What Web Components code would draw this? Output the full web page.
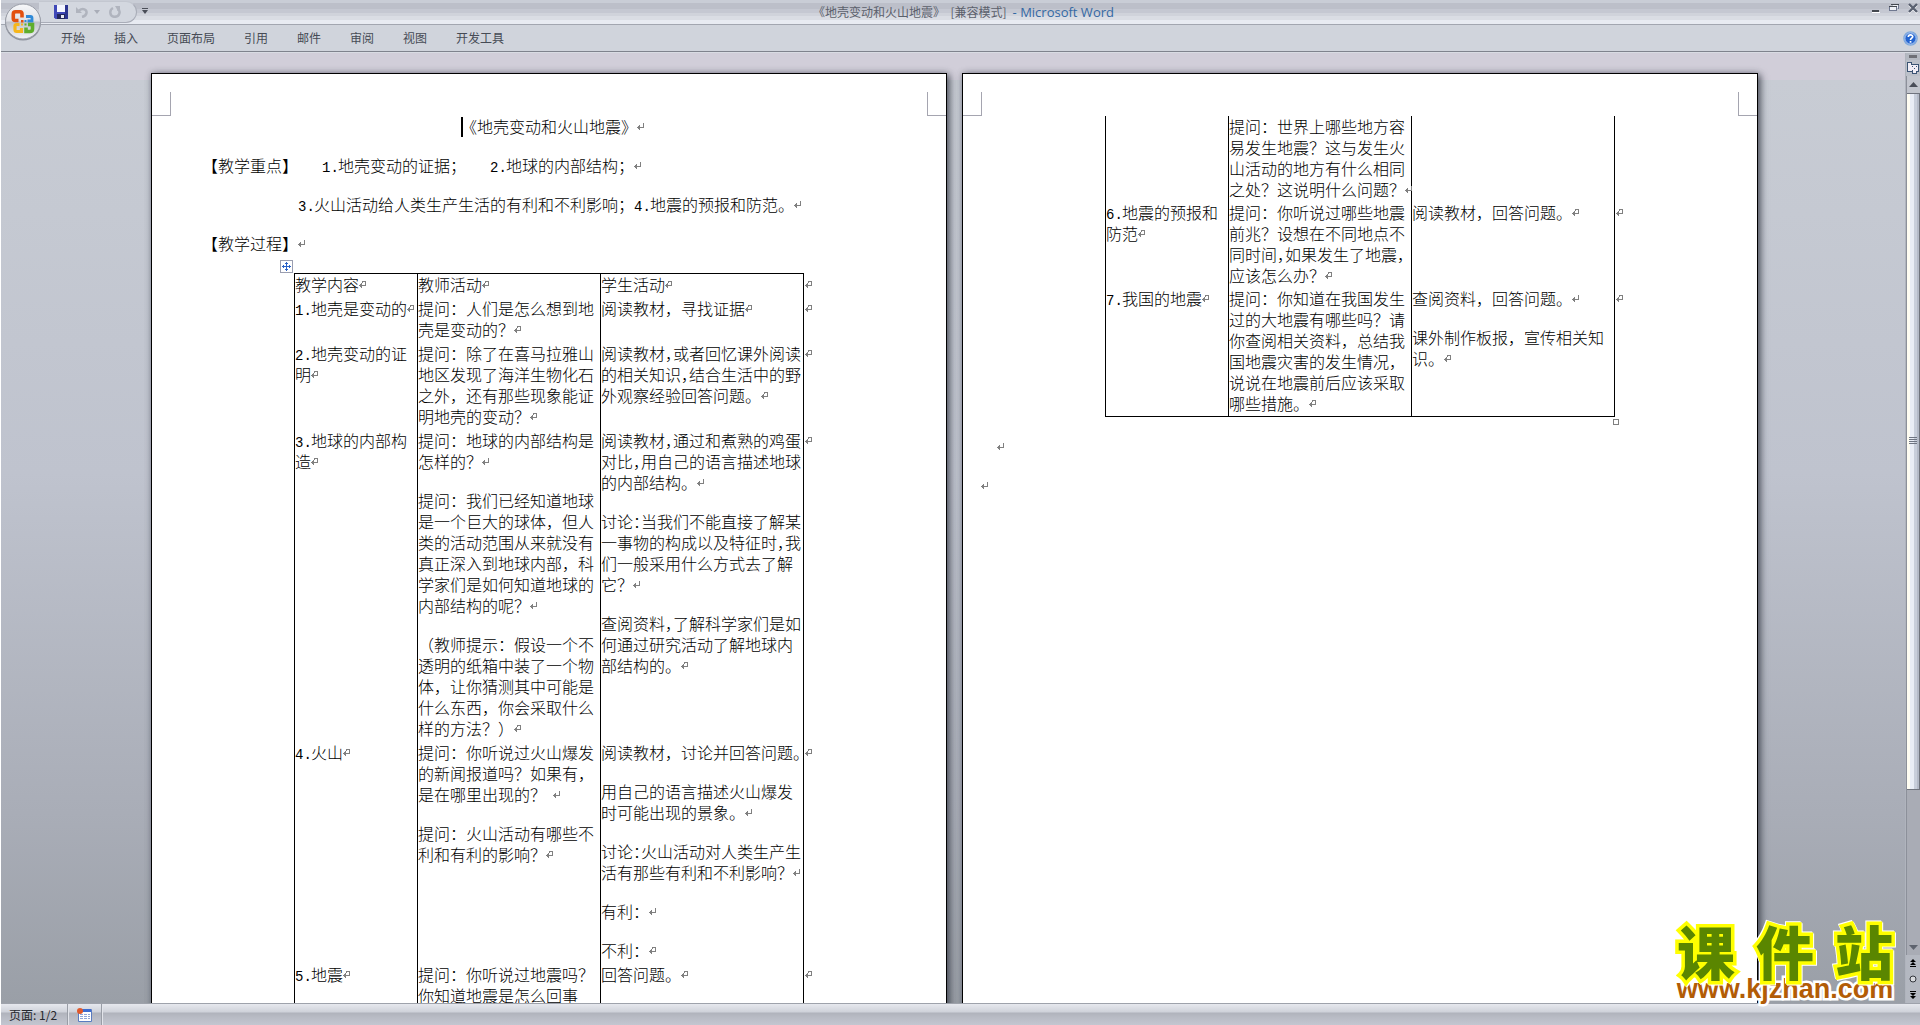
<!DOCTYPE html>
<html lang="zh-CN">
<head>
<meta charset="utf-8">
<title>《地壳变动和火山地震》 - Microsoft Word</title>
<style>
html, body { height: 100%; margin: 0; }
body { background: #fff; overflow: hidden; font-family: "Noto Sans CJK SC", sans-serif; }
</style>
</head>
<body>
<word-window></word-window>
<script>
const define = (name, html, init) => {
  const tpl = document.createElement('template');
  tpl.innerHTML = html;
  customElements.define(name, class extends HTMLElement {
    constructor() {
      super();
      this.attachShadow({ mode: 'open' }).append(tpl.content.cloneNode(true));
    }
    connectedCallback() { if (init) init(this, this.shadowRoot); }
  });
};

/* Formatting marks: "para" ends a paragraph, "cell" ends a table cell */
define('para-mark', `
<style>
:host { display: inline-block; width: 8px; height: 8px; margin-right: -8px; vertical-align: 2px; line-height: 0; }
svg { display: block; fill: none; stroke: #808080; shape-rendering: crispEdges; }
:host(:not([kind=cell])) .cell, :host([kind=cell]) .para { display: none; }
</style>
<svg width="8" height="8" viewBox="0 0 8 8" aria-hidden="true">
  <path class="para" d="M6.5 0V4M7 4.5H0M1.5 3V6M2.5 2V7"/>
  <path class="cell" d="M3 .5H7M6.5 0V5M3.5 0V2M7 4.5H0M1.5 3V6M2.5 2V7"/>
</svg>`);

/* "~" after a mark asks for its half-width form; a closing "^" leaves out the end mark */
const richLine = s => s
  .replace(/^(\d\.)/, '<span class="num">$1</span>')
  .replace(/([，：])~/g, '<span class="half">$1</span>');
const richText = (s, kind) =>
  s.replace('^', '').split('\n').map(richLine).join('<br>') + (s.endsWith('^') ? '' : `<para-mark kind="${kind}"></para-mark>`);
const typeStyles = `
.num { display: inline-block; width: 16px; font: 400 14px/16px "Liberation Mono", monospace; }
.half { font-feature-settings: "halt"; }`;

const lessons = {
  first: [
    [['教学内容'], ['教师活动'], ['学生活动']],
    [['1.地壳是变动的'], ['提问：人们是怎么想到地\n壳是变动的？'], ['阅读教材，寻找证据']],
    [['2.地壳变动的证\n明'],
     ['提问：除了在喜马拉雅山\n地区发现了海洋生物化石\n之外，还有那些现象能证\n明地壳的变动？'],
     ['阅读教材，~或者回忆课外阅读\n的相关知识，~结合生活中的野\n外观察经验回答问题。']],
    [['3.地球的内部构\n造'],
     ['提问：地球的内部结构是\n怎样的？',
      '提问：我们已经知道地球\n是一个巨大的球体，但人\n类的活动范围从来就没有\n真正深入到地球内部，科\n学家们是如何知道地球的\n内部结构的呢？',
      '（教师提示：假设一个不\n透明的纸箱中装了一个物\n体，让你猜测其中可能是\n什么东西，你会采取什么\n样的方法？）'],
     ['阅读教材，~通过和煮熟的鸡蛋\n对比，~用自己的语言描述地球\n的内部结构。',
      '讨论：~当我们不能直接了解某\n一事物的构成以及特征时，~我\n们一般采用什么方式去了解\n它？',
      '查阅资料，~了解科学家们是如\n何通过研究活动了解地球内\n部结构的。']],
    [['4.火山'],
     ['提问：你听说过火山爆发\n的新闻报道吗？如果有，\n是在哪里出现的？&nbsp;&nbsp;', '提问：火山活动有哪些不\n利和有利的影响？'],
     ['阅读教材，讨论并回答问题。^', '用自己的语言描述火山爆发\n时可能出现的景象。',
      '讨论：~火山活动对人类生产生\n活有那些有利和不利影响？', '有利：', '不利：']],
    [['5.地震'], ['提问：你听说过地震吗？\n你知道地震是怎么回事^'], ['回答问题。']]
  ],
  second: [
    [[], ['提问：世界上哪些地方容\n易发生地震？这与发生火\n山活动的地方有什么相同\n之处？这说明什么问题？'], []],
    [['6.地震的预报和\n防范'],
     ['提问：你听说过哪些地震\n前兆？设想在不同地点不\n同时间，~如果发生了地震，~\n应该怎么办？'],
     ['阅读教材，回答问题。']],
    [['7.我国的地震'],
     ['提问：你知道在我国发生\n过的大地震有哪些吗？请\n你查阅相关资料，总结我\n国地震灾害的发生情况，\n说说在地震前后应该采取\n哪些措施。'],
     ['查阅资料，回答问题。', '课外制作板报，宣传相关知\n识。']]
  ]
};

define('lesson-table', `
<style>
:host { display: block; position: relative; width: 510px; margin-left: 124px; }
table { border-collapse: collapse; table-layout: fixed; width: 523px; }
td, th { padding: 0 0 var(--row-gap, 3px) 0; vertical-align: top; text-align: left; font-weight: inherit; white-space: nowrap;
  border-left: 1px solid #000; border-right: 1px solid #000; line-height: 21px; }
.end { border-right: 0; padding-left: 1px; }
:host([part-of=start]) tr:first-child > :not(.end) { border-top: 1px solid #000; }
:host([part-of=finish]) tr:last-child > :not(.end) { border-bottom: 1px solid #000; }
p { margin: 0 0 18px; }
p:last-child { margin: 0; }
.handle { position: absolute; left: -14px; top: -13px; }
.corner { position: absolute; left: 508px; bottom: -8px; width: 4px; height: 4px; border: 1px solid #808080; display: none; }
:host([part-of=start]) .handle { display: block; }
:host([part-of=finish]) .corner { display: block; }
:host([part-of=finish]) .handle { display: none; }
${typeStyles}
</style>
<table><colgroup><col style="width:123px"><col style="width:183px"><col style="width:203px"><col style="width:14px"></colgroup><tbody></tbody></table>
<svg class="handle" width="13" height="13" viewBox="0 0 13 13" aria-hidden="true" shape-rendering="crispEdges">
  <path d="M.5.5h12v12H.5z" fill="#fff" stroke="#9a9eb0"/>
  <path d="M6.5 2v9M2 6.5h9M5 3.5h3M5 9.5h3M3.5 5v3M9.5 5v3" stroke="#2a62c8" fill="none"/>
</svg>
<span class="corner"></span>`, (host, root) => {
  const rows = lessons[host.getAttribute('lessons')];
  const start = host.getAttribute('part-of') === 'start';
  root.querySelector('tbody').innerHTML = rows.map((row, r) => {
    const tag = start && r === 0 ? 'th' : 'td';
    const runsOn = !start && r === 0;
    const cells = row.map(paras => `<${tag}>` + paras.map((p, i) =>
      `<p>${richText(p, i === paras.length - 1 && !runsOn ? 'cell' : 'para')}</p>`).join('') + `</${tag}>`).join('');
    const end = runsOn ? '' : '<para-mark kind="cell"></para-mark>';
    return `<tr>${cells}<td class="end">${end}</td></tr>`;
  }).join('');
});

define('doc-para', `
<style>
:host { display: block; margin-bottom: 18px; line-height: 21px; white-space: nowrap; }
:host([indent="1"]) { padding-left: 16px; }
:host([indent="2"]) { padding-left: 32px; }
:host([indent="8"]) { padding-left: 128px; }
:host([centered]) { text-align: center; }
.caret { display: inline-block; width: 2px; height: 20px; margin-right: -2px; background: #000; vertical-align: -4px; }
.item + .item, .head + .item { margin-left: 24px; }
${typeStyles}
</style><span class="body"></span>`, (host, root) => {
  const parts = (host.getAttribute('text') || '').split('|').filter(Boolean);
  root.querySelector('.body').innerHTML =
    (host.hasAttribute('caret') ? '<span class="caret"></span>' : '') +
    parts.map(p => `<span class="${p[0] === '【' ? 'head' : host.hasAttribute('run') ? '' : 'item'}">${richLine(p)}</span>`).join('') +
    '<para-mark></para-mark>';
});

define('doc-page', `
<style>
:host { display: block; flex: none; box-sizing: border-box; width: 796px; min-height: 1125px; border: 1px solid #000; background: #fff; color: #000;
  box-shadow: 3px 2px 7px rgba(40,44,56,.65), 0 0 6px rgba(90,96,110,.45); font-size: 16px; font-weight: 300; }
.corners { display: flex; justify-content: space-between; padding-top: 18px; }
.corners i { box-sizing: border-box; width: 19px; height: 24px; border-bottom: 1px solid #a5a5b0; }
.corners i:first-child { border-right: 1px solid #a5a5b0; }
.corners i:last-child { border-left: 1px solid #a5a5b0; }
.content { padding: 0 18px; }
</style>
<div class="corners"><i></i><i></i></div>
<div class="content"><slot></slot></div>`);

define('quick-access', `
<style>
:host { display: flex; align-items: flex-start; height: 24px; }
.tray { box-sizing: border-box; display: flex; align-items: center; height: 22px; margin-left: 38px; padding: 0 13px 0 15px; width: 98px; margin-top: 1px;
  border: 1px solid #a9adb8; border-left: 0; border-top-color: #c3c7d0; border-radius: 0 12px 12px 0; background: #d3d7df; }
button { padding: 0; border: 0; background: none; display: block; }
svg { display: block; }
.undo { margin-left: 8px; }
.drop { margin-left: 6px; }
.redo { margin-left: 9px; }
.more { margin: 8px 0 0 5px; }
</style>
<div class="tray">
  <button aria-label="保存"><svg width="14" height="14" viewBox="0 0 14 14"><path d="M0 0h14v14H1.500L0 12.500z" fill="#3f48b8"/><path d="M3 0h8v7H3z" fill="#f4f6ff"/><path d="M11 0h3v14h-3z" fill="#2c3490"/><path d="M3 9h8v5H3z" fill="#23275c"/><path d="M7 10h3v3H7z" fill="#e8eaf4"/></svg></button>
  <button class="undo" aria-label="撤消"><svg width="12" height="12" viewBox="0 0 12 12"><path d="M3 4.500c4-3 8-1 7.500 2.500C10.200 9 8 10.500 6 11" fill="none" stroke="#b0b4be" stroke-width="2.500"/><path d="M0 1v6h6z" fill="#b0b4be"/></svg></button>
  <button class="drop" aria-label="撤消列表"><svg width="6" height="4"><path d="M0 0h6L3 4z" fill="#a9adb8"/></svg></button>
  <button class="redo" aria-label="重复"><svg width="12" height="12" viewBox="0 0 12 12"><path d="M4 2C0 4 .5 10.500 5.500 10.800 11 11 12 4.500 8.500 3" fill="none" stroke="#b0b4be" stroke-width="2.500"/><path d="M6 0h5v5H9z" fill="#b0b4be"/></svg></button>
</div>
<button class="more" aria-label="自定义快速访问工具栏"><svg width="6" height="6"><path d="M0 0h6v1H0zM0 2h6L3 6z" fill="#4a4e58"/></svg></button>`);

define('title-bar', `
<style>
:host { display: grid; grid-template-columns: 1fr auto 1fr; height: 24px; border-bottom: 1px solid #a2a6b0;
  background: linear-gradient(#c9cdd6 0 3px, #bcbfc9 3px 9px, #c5c8d2 9px 13px, #d0d3db 13px 16px, #dadde4 16px 20px, #e8ebf2 20px); }
h1 { margin: 0; padding-left: 6px; font-size: 12px; font-weight: 400; line-height: 24px; color: #5b606b; white-space: pre; }
h1 b { font: 400 13px/22px "Open Sans", sans-serif; color: #3468a4; }
.ctl { display: flex; justify-content: flex-end; align-items: flex-start; gap: 9px; padding: 3px 2px 0 0; }
button { padding: 0; border: 0; background: none; }
svg { display: block; }
</style>
<quick-access></quick-access>
<h1>《地壳变动和火山地震》  [兼容模式] <b> - Microsoft Word</b></h1>
<div class="ctl">
  <button aria-label="最小化"><svg width="8" height="11" shape-rendering="crispEdges"><path d="M0 7h7v2H0z" fill="#44484f"/><path d="M0 9h8v1H0z" fill="#fff"/></svg></button>
  <button aria-label="还原"><svg width="10" height="11" shape-rendering="crispEdges"><path d="M2.500 1.500h7v4h-1M.5 3.500h7v4H.5z" fill="#eef0f5" stroke="#6f7890"/><path d="M2 1h8v1H2zM0 3h8v1H0z" fill="#44484f"/></svg></button>
  <button aria-label="关闭"><svg width="10" height="11"><path d="M1 2l8 8M9 2L1 10" stroke="#fff" stroke-width="2"/><path d="M1 1l8 8M9 1L1 9" stroke="#596070" stroke-width="2.400"/></svg></button>
</div>`);

define('ribbon-tabs', `
<style>
:host { display: flex; align-items: center; height: 26px; padding-left: 60px; background: #d0d4dc; border-bottom: 1px solid #7f838d; }
nav { display: flex; gap: 29px; flex: 1; }
button { padding: 0; border: 0; background: none; font: 400 12px/18px "Noto Sans CJK SC", sans-serif; color: #464b55; white-space: nowrap; }
.help { margin-right: 2px; }
svg { display: block; }
</style>
<nav><button>开始</button><button>插入</button><button>页面布局</button><button>引用</button><button>邮件</button><button>审阅</button><button>视图</button><button>开发工具</button></nav>
<button class="help" aria-label="帮助"><svg width="15" height="15" viewBox="0 0 15 15"><circle cx="7.500" cy="7.500" r="6.500" fill="#2464d0" stroke="#7fa8dc" stroke-width="1.500"/><circle cx="7.500" cy="7.500" r="5.500" fill="none" stroke="#e8f0ff" stroke-width=".6"/><path d="M5.300 6C5.300 3.200 9.800 3.200 9.700 5.800 9.600 7.200 7.500 7.200 7.500 9" fill="none" stroke="#fff" stroke-width="1.700"/><path d="M6.700 10h1.700v1.700H6.700z" fill="#fff"/></svg></button>`);

define('office-button', `
<style>
:host { position: absolute; left: 4px; top: 3px; }
button { display: block; padding: 0; border: 0; background: none; }
svg { display: block; }
</style>
<button aria-label="Office 按钮"><svg width="38" height="38" viewBox="0 0 38 38">
  <defs><linearGradient id="g" x2="0" y2="1"><stop offset="0" stop-color="#f7f8fa"/><stop offset=".48" stop-color="#dfe1e6"/><stop offset=".52" stop-color="#bfc2ca"/><stop offset="1" stop-color="#f4f5f8"/></linearGradient></defs>
  <circle cx="19" cy="19.500" r="18" fill="#8e929c"/><circle cx="19" cy="18.500" r="17.500" fill="url(#g)" stroke="#9a9ea8"/>
  <g fill="none" stroke-width="3.600">
    <path d="M18 14.500V11Q18 8.800 16 8.800H11.500Q9.300 8.800 9.300 11V15.500Q9.300 17.500 11.500 17.500H14.500" stroke="#e2500f"/>
    <path d="M22 13.500H26.500Q28 13.500 28 15V18H23.500" stroke="#2f8ad8" stroke-width="2.800"/>
    <path d="M15.500 21.500H12.500Q11 21.500 11 23V26.500Q11 28.500 12.500 28.500H17.500V25" stroke="#f6b61c" stroke-width="3.200"/>
    <path d="M22 24.500V28.500H26Q28.500 28.500 28.500 26V21.500H24" stroke="#5fae2c"/>
  </g>
  <path d="M17 17h2.500v2.500H17z" fill="#e2500f"/><path d="M20.500 17h2v2h-2z" fill="#2f8ad8"/><path d="M17 20.500h2v2h-2z" fill="#f6b61c"/><path d="M20.500 20.500h2v2h-2z" fill="#5fae2c"/>
</svg></button>`);

define('scroll-bar', `
<style>
:host { display: flex; flex-direction: column; flex: none; width: 14px; background: #b4b8c1; border-left: 1px solid #b0b4bd; }
button { display: flex; align-items: center; justify-content: center; flex: none; padding: 0; border: 0; background: none; width: 100%; }
svg { display: block; }
.split { height: 7px; }
.ruler { height: 16px; background: #bcc0c9; }
.up { height: 17px; background: #c3c6ce; border: 1px solid #8c909a; border-width: 0 0 0 1px; }
.track { flex: 1; display: flex; flex-direction: column; background: #a9acb5; border-left: 1px solid #8c909a; }
.thumb { flex: 698 0 0; box-sizing: border-box; display: flex; align-items: center; justify-content: center; border: 1px solid #70747e; border-left-width: 0;
  background: linear-gradient(90deg, #fffdf2 0 3px, #e9edf6 3px 7px, #c8cedb 7px 10px, #b4bac8 10px); }
.rest { flex: 150 0 0; }
.down { height: 16px; background: #a9acb5; border-left: 1px solid #8c909a; }
.browse { height: 16px; }
</style>
<button class="split" aria-label="拆分"><svg width="8" height="3"><path d="M0 0h8v3H0z" fill="#6e6f76"/></svg></button>
<button class="ruler" aria-label="标尺"><svg width="12" height="12" viewBox="0 0 12 12" shape-rendering="crispEdges"><path d="M.5 3.500V.5h4v2h7v7h-2v2h-4v-2h-5z" fill="#f2eef6" stroke="#3c5474"/><path d="M5 4h1v1H5zM7 6h1v1H7zM5 8h1v1H5zM9 4h1v1H9z" fill="#3c5474"/></svg></button>
<button class="up" aria-label="向上滚动"><svg width="9" height="5"><path d="M0 5h9L4.500 0z" fill="#4a4e58"/></svg></button>
<div class="track"><div class="thumb"><svg width="8" height="8" shape-rendering="crispEdges"><path d="M0 .5h8M0 2.500h8M0 4.500h8M0 6.500h8" stroke="#6e7482"/></svg></div><div class="rest"></div></div>
<button class="down" aria-label="向下滚动"><svg width="9" height="5"><path d="M0 0h9L4.500 5z" fill="#5e636e"/></svg></button>
<button class="browse" aria-label="上一页"><svg width="6" height="8"><path d="M3 0l3 3H0zM3 3l3 3H0zM0 7h6v1H0z" fill="#000"/></svg></button>
<button class="browse" aria-label="选择浏览对象"><svg width="8" height="8"><circle cx="4" cy="4" r="3" fill="#d8dade" stroke="#33363c"/></svg></button>
<button class="browse" aria-label="下一页"><svg width="6" height="8"><path d="M0 0h6v1H0zM0 2h6L3 5zM0 5h6L3 8z" fill="#000"/></svg></button>`);

define('status-bar', `
<style>
:host { display: flex; align-items: stretch; height: 21px; border-top: 1px solid #9ea2ab;
  background: linear-gradient(#e6e8ee 0, #cfd2da 8px, #b0b3bc 9px, #b8bbc4 13px, #c3c6d0 21px); }
.seg { display: flex; align-items: center; border-right: 1px solid #999da6; box-shadow: 1px 0 #e2e4ea; }
.page { padding: 0 8px; width: 50px; font-size: 12px; line-height: 20px; color: #26282e; white-space: nowrap; }
button { display: block; padding: 0 9px; border: 0; background: none; }
svg { display: block; }
</style>
<div class="seg page">页面: 1/2</div>
<div class="seg"><button aria-label="宏录制"><svg width="15" height="14" viewBox="0 0 15 14"><path d="M1.500 1.500h13v12h-13z" fill="#fff" stroke="#5a7cc0"/><path d="M2 1h12v3H2z" fill="#3d6cd0"/><path d="M3 6.500h10M3 8.500h10M3 10.500h10" stroke="#8ea6d8" stroke-dasharray="3 1"/><circle cx="3" cy="3" r="3" fill="#e0592c"/></svg></button></div>`);

define('site-badge', `
<style>
:host { position: absolute; right: 22px; bottom: 24px; width: 226px; }
.name { display: flex; justify-content: space-between; padding: 0 5px; font-size: 58px; font-weight: 900; line-height: 54px; color: #5a8600;
  -webkit-text-stroke: 7px #ff0; paint-order: stroke fill; filter: drop-shadow(1px 1px 0 #fff) drop-shadow(-1px -1px 0 #fff); }
.url { display: block; text-align: center; font: 700 27px/24px "Liberation Sans", sans-serif; color: #b25c06; text-decoration: none;
  -webkit-text-stroke: 5px #fff; paint-order: stroke fill; }
</style>
<div class="name"><span>课</span><span>件</span><span>站</span></div>
<a class="url" href="#">www.kjzhan.com</a>`);

define('word-window', `
<style>
:host { display: flex; flex-direction: column; position: relative; height: 100vh; box-sizing: border-box; padding-left: 1px; overflow: hidden; }
title-bar, ribbon-tabs, status-bar { flex: none; }
.work { flex: 1; min-height: 0; display: flex; border-top: 1px solid #d9dce3; }
.desk { flex: 1; min-width: 0; overflow: hidden; display: flex; justify-content: center; gap: 15px; padding: 20px 0 0 3px;
  background: linear-gradient(#d1ced9 0 27px, #c8ccd4 27px, #bfc3ce 420px, #a9adb7 760px, #9a9fa7 950px); }
.first { margin-top: 19px; }
.second { --row-gap: 2px; margin-bottom: 19px; }
</style>
<title-bar></title-bar>
<ribbon-tabs></ribbon-tabs>
<div class="work">
  <main class="desk">
    <doc-page>
      <doc-para centered caret text="《地壳变动和火山地震》"></doc-para>
      <doc-para indent="2" text="【教学重点】|1.地壳变动的证据；|2.地球的内部结构；"></doc-para>
      <doc-para indent="8" run text="3.火山活动给人类生产生活的有利和不利影响；|4.地震的预报和防范。"></doc-para>
      <doc-para indent="2" text="【教学过程】"></doc-para>
      <lesson-table class="first" part-of="start" lessons="first"></lesson-table>
    </doc-page>
    <doc-page>
      <lesson-table class="second" part-of="finish" lessons="second"></lesson-table>
      <doc-para indent="1"></doc-para>
      <doc-para></doc-para>
    </doc-page>
  </main>
  <scroll-bar></scroll-bar>
</div>
<status-bar></status-bar>
<office-button></office-button>
<site-badge></site-badge>`);
</script>
</body>
</html>
